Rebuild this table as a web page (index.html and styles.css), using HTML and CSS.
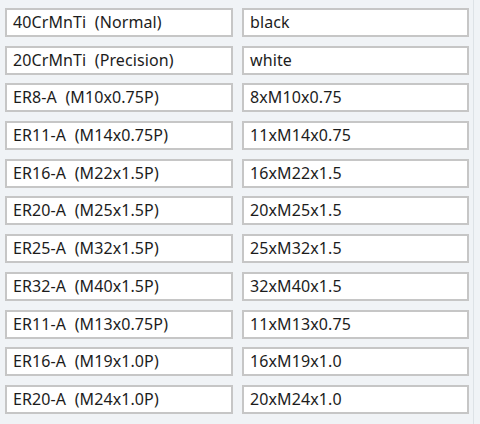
FILE: index.html
```html
<!DOCTYPE html>
<html>
<head>
<meta charset="utf-8">
<link rel="stylesheet" href="styles.css">
</head>
<body>
<div class="table">
  <div class="cell">40CrMnTi&nbsp;&nbsp;(Normal)</div><div class="cell">black</div>
  <div class="cell">20CrMnTi&nbsp;&nbsp;(Precision)</div><div class="cell">white</div>
  <div class="cell">ER8-A&nbsp;&nbsp;(M10x0.75P)</div><div class="cell">8xM10x0.75</div>
  <div class="cell">ER11-A&nbsp;&nbsp;(M14x0.75P)</div><div class="cell">11xM14x0.75</div>
  <div class="cell">ER16-A&nbsp;&nbsp;(M22x1.5P)</div><div class="cell">16xM22x1.5</div>
  <div class="cell">ER20-A&nbsp;&nbsp;(M25x1.5P)</div><div class="cell">20xM25x1.5</div>
  <div class="cell">ER25-A&nbsp;&nbsp;(M32x1.5P)</div><div class="cell">25xM32x1.5</div>
  <div class="cell">ER32-A&nbsp;&nbsp;(M40x1.5P)</div><div class="cell">32xM40x1.5</div>
  <div class="cell">ER11-A&nbsp;&nbsp;(M13x0.75P)</div><div class="cell">11xM13x0.75</div>
  <div class="cell">ER16-A&nbsp;&nbsp;(M19x1.0P)</div><div class="cell">16xM19x1.0</div>
  <div class="cell">ER20-A&nbsp;&nbsp;(M24x1.0P)</div><div class="cell">20xM24x1.0</div>
</div>
</body>
</html>
```
FILE: styles.css
```css
html, body {
  margin: 0;
  padding: 0;
  background: #f0f3f6;
  width: 480px;
  height: 424px;
  overflow: hidden;
}
.table {
  display: grid;
  grid-template-columns: 228px 227px;
  grid-auto-rows: 29px;
  column-gap: 9px;
  row-gap: 8.7px;
  width: 474px;
  height: 424px;
  box-sizing: border-box;
  padding: 8px 0 0 5px;
  border-right: 1px solid #dde2e6;
  font-family: "Noto Sans", "Open Sans", sans-serif;
  font-size: 16px;
  letter-spacing: 0.1px;
  color: #1c1c1c;
}
.cell {
  box-sizing: border-box;
  background: #fff;
  border: 2px solid #c6c6c6;
  padding: 0 0 1px 6px;
  display: flex;
  align-items: center;
  white-space: nowrap;
}
```
